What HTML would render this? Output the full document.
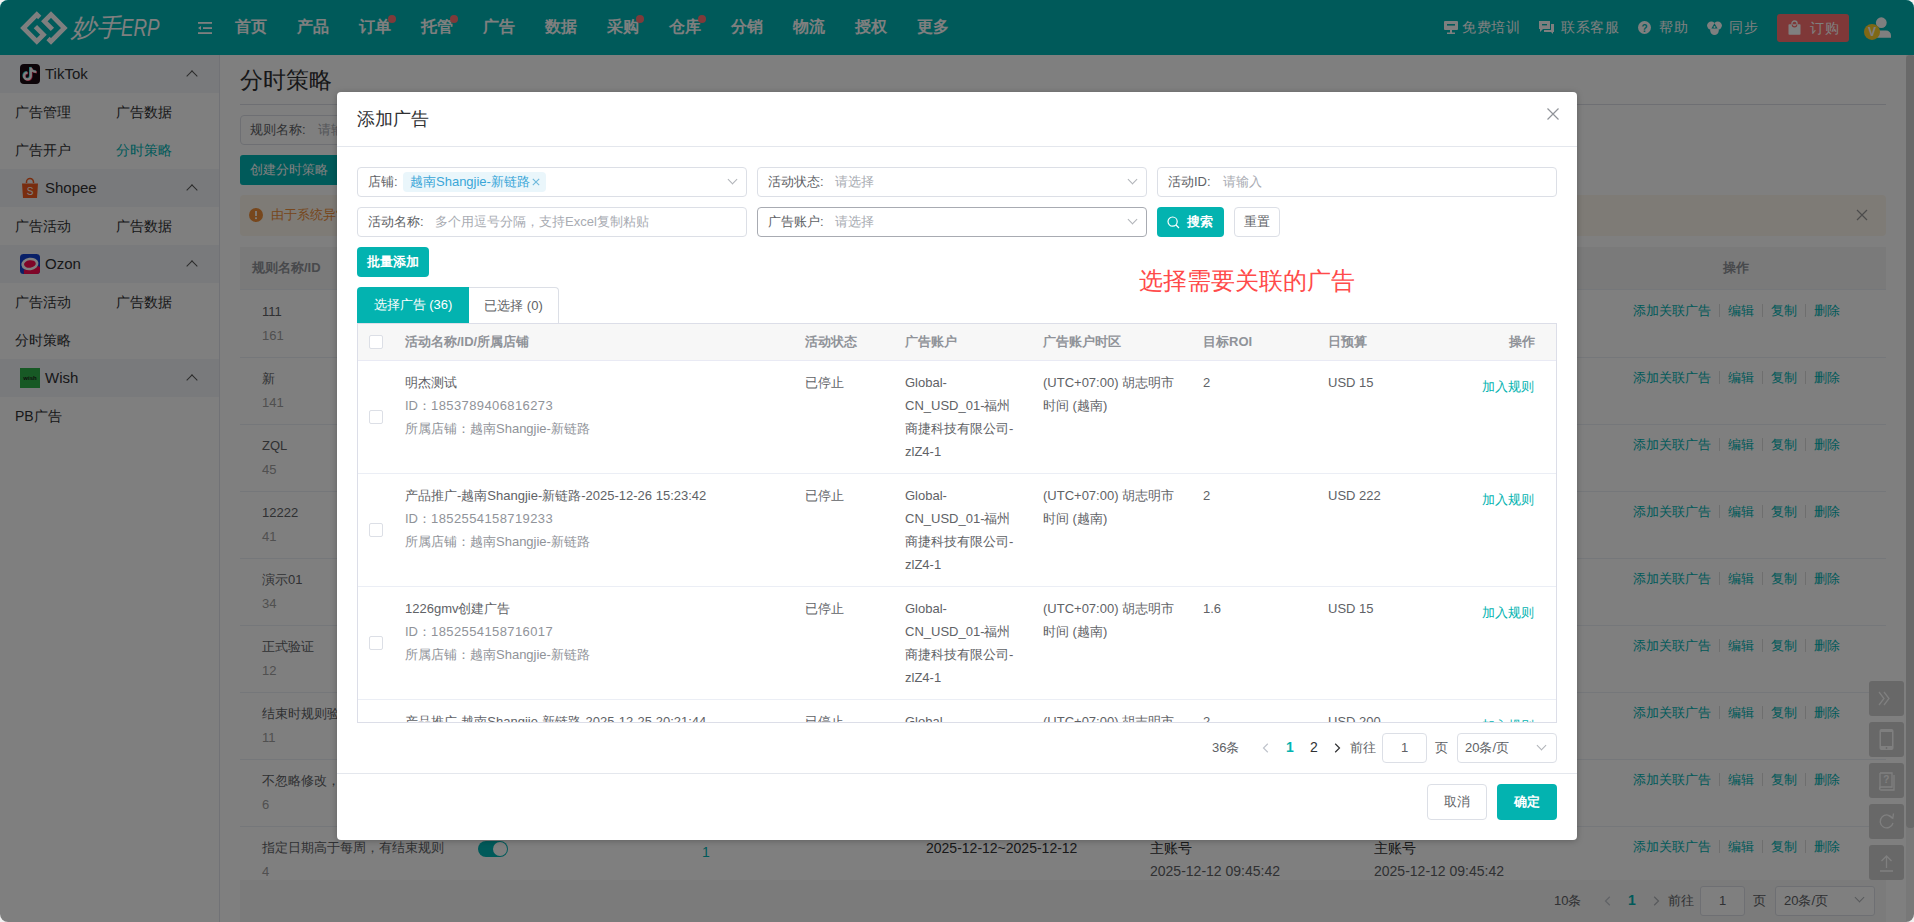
<!DOCTYPE html>
<html><head><meta charset="utf-8">
<style>
*{box-sizing:border-box;margin:0;padding:0}
html,body{width:1914px;height:922px;overflow:hidden;background:#f2f2f2}
body{font-family:"Liberation Sans",sans-serif;color:#606266;font-size:14px}
#scr{position:absolute;left:0;top:0;width:1914px;height:922px;overflow:hidden;border-radius:8px;background:#fff}
.abs{position:absolute}
/* header */
#hdr{position:absolute;left:0;top:0;width:1914px;height:55px;background:#00b4b4}
.nav{position:absolute;top:17px;font-size:16px;font-weight:bold;color:#fff;line-height:20px;white-space:nowrap}
.dot{position:absolute;width:8px;height:8px;border-radius:50%;background:#ff7474}
.hr{position:absolute;top:18px;font-size:14px;color:#fff;line-height:18px;white-space:nowrap;letter-spacing:0.6px}
/* sidebar */
#side{position:absolute;left:0;top:55px;width:220px;height:867px;background:#fff;border-right:1px solid #e2e4ec}
.sg{position:absolute;left:0;width:219px;height:38px;background:#f3f5f9}
.sg .t{position:absolute;left:45px;top:10px;font-size:15px;color:#303133;line-height:18px}
.sg .ic{position:absolute;left:20px;top:9px;width:20px;height:20px;border-radius:4px}
.sg .car{position:absolute;left:188px;top:17px;width:8px;height:8px;border-left:1.3px solid #555;border-top:1.3px solid #555;transform:rotate(45deg)}
.si{position:absolute;font-size:14px;color:#303133;line-height:18px;white-space:nowrap}
/* content */
.ct{position:absolute;white-space:nowrap}
.act{position:absolute;left:1633px;font-size:13px;color:#00b4b4;white-space:nowrap;line-height:18px}
.act i{display:inline-block;width:1px;height:13px;background:#dcdcdc;margin:0 8px 0 8px;vertical-align:-2px}
/* overlay */
#ov{position:absolute;left:0;top:0;width:1914px;height:922px;background:rgba(0,0,0,.5)}
/* modal */
#md{position:absolute;left:337px;top:92px;width:1240px;height:748px;background:#fff;border-radius:4px;box-shadow:0 1px 6px rgba(0,0,0,.25)}
.inp{position:absolute;height:30px;border:1px solid #dcdfe6;border-radius:4px;background:#fff}
.inp .lb{position:absolute;left:10px;top:6px;font-size:13px;color:#606266;line-height:16px;white-space:nowrap}
.inp .ph{position:absolute;top:6px;font-size:13px;color:#a8abb2;line-height:16px;white-space:nowrap}
.arr{position:absolute;width:7px;height:7px;border-right:1px solid #b0b3b8;border-bottom:1px solid #b0b3b8;transform:rotate(45deg)}
.btn{position:absolute;border-radius:4px;font-size:13px;text-align:center;white-space:nowrap}
.th{position:absolute;top:10px;font-size:13px;font-weight:bold;color:#909399;line-height:16px;white-space:nowrap}
.row{position:absolute;left:0;width:1198px;height:113px;border-bottom:1px solid #ebeef5}
.cell{position:absolute;top:10px;font-size:13px;line-height:23px;color:#606266;white-space:nowrap}
.cb{position:absolute;left:11px;width:14px;height:14px;border:1px solid #dcdfe6;border-radius:2px;background:#fff}
.gray{color:#909399}
</style></head><body>
<div id="scr">
<!-- HEADER -->
<div id="hdr">
  <svg class="abs" style="left:0;top:0" width="80" height="55" viewBox="0 0 80 55">
    <g fill="none" stroke="#fff" stroke-width="4.7" stroke-linejoin="miter" stroke-linecap="butt">
      <polyline points="39.75,17.44 36.8,14.6 23.45,28 36.8,41.35 43.45,34.7 35.4,26.55"/>
      <polyline transform="rotate(180 43.9 28)" points="39.75,17.44 36.8,14.6 23.45,28 36.8,41.35 43.45,34.7 35.4,26.55"/>
    </g>
  </svg>
  <div class="abs" style="left:71px;top:12px;font-size:25px;font-style:italic;color:#fff;line-height:30px;white-space:nowrap">妙手</div><div class="abs" style="left:121px;top:13px;font-size:24px;font-style:italic;color:#fff;line-height:30px;white-space:nowrap;transform:scaleX(0.78);transform-origin:0 0">ERP</div>
  <svg class="abs" style="left:197px;top:21px" width="17" height="15" viewBox="0 0 17 15"><g fill="#fff"><rect x="1" y="1" width="14" height="1.8"/><rect x="6" y="6.2" width="9" height="1.8"/><rect x="1" y="11.2" width="14" height="1.8"/><path d="M1 7.1 L4 5 L4 9 Z"/></g></svg>
  <div class="nav" style="left:235px">首页</div>
  <div class="nav" style="left:297px">产品</div>
  <div class="nav" style="left:359px">订单</div><div class="dot" style="left:388px;top:15px"></div>
  <div class="nav" style="left:421px">托管</div><div class="dot" style="left:450px;top:15px"></div>
  <div class="nav" style="left:483px">广告</div>
  <div class="nav" style="left:545px">数据</div>
  <div class="nav" style="left:607px">采购</div><div class="dot" style="left:636px;top:15px"></div>
  <div class="nav" style="left:669px">仓库</div><div class="dot" style="left:698px;top:15px"></div>
  <div class="nav" style="left:731px">分销</div>
  <div class="nav" style="left:793px">物流</div>
  <div class="nav" style="left:855px">授权</div>
  <div class="nav" style="left:917px">更多</div>
  <!-- right -->
  <svg class="abs" style="left:1444px;top:20px" width="14" height="14" viewBox="0 0 14 14"><g fill="#fff"><rect x="0" y="1" width="14" height="9" rx="1"/><rect x="6" y="10" width="2" height="3"/><rect x="3" y="12.5" width="8" height="1.5"/></g><rect x="3" y="4" width="8" height="1.6" fill="#00b4b4"/></svg>
  <div class="hr" style="left:1462px">免费培训</div>
  <svg class="abs" style="left:1539px;top:20px" width="15" height="14" viewBox="0 0 15 14"><path d="M0 1h11v8H4l-3 3V9H0z" fill="#fff"/><path d="M12 4h3v8h-1v2l-2-2H5v-2h7z" fill="#fff"/><rect x="3" y="4" width="5" height="1.4" fill="#00b4b4"/></svg>
  <div class="hr" style="left:1561px">联系客服</div>
  <svg class="abs" style="left:1638px;top:21px" width="13" height="13" viewBox="0 0 13 13"><circle cx="6.5" cy="6.5" r="6.5" fill="#fff"/><text x="6.5" y="10.5" font-size="10" font-weight="bold" text-anchor="middle" fill="#00b4b4" font-family="Liberation Sans">?</text></svg>
  <div class="hr" style="left:1659px">帮助</div>
  <svg class="abs" style="left:1707px;top:21px" width="15" height="14" viewBox="0 0 15 14"><g fill="#fff"><circle cx="4.3" cy="4.6" r="4.2"/><circle cx="10.7" cy="4.6" r="4.2"/><circle cx="7.5" cy="9.6" r="4.3"/></g><path d="M7.5 2.2L10.6 7.6H4.4Z" fill="#00b4b4"/><circle cx="7.5" cy="5.9" r="1" fill="#fff"/></svg>
  <div class="hr" style="left:1729px">同步</div>
  <div class="abs" style="left:1777px;top:14px;width:72px;height:28px;border-radius:3px;background:#ff7070"></div>
  <svg class="abs" style="left:1788px;top:20px" width="13" height="15" viewBox="0 0 13 15"><circle cx="6.5" cy="3.6" r="2.6" fill="none" stroke="#fff" stroke-width="1.3"/><rect x="0.5" y="4.2" width="12" height="10.6" rx="0.8" fill="#fff"/><path d="M4.2 4.6a2.3 2.3 0 0 0 4.6 0" fill="none" stroke="#ff7070" stroke-width="1.1"/></svg>
  <div class="hr" style="left:1810px;top:19px">订购</div>
  <svg class="abs" style="left:1862px;top:14px" width="34" height="30" viewBox="0 0 34 30"><circle cx="19.3" cy="8.7" r="5.4" fill="#fff"/><path d="M13 16.5 h11 a5 5 0 0 1 5 5 v2.2 h-16z" fill="#fff"/><circle cx="10" cy="17.9" r="8" fill="#ffd02a"/><text x="10" y="22.3" font-size="12" font-weight="bold" text-anchor="middle" fill="#fff" font-family="Liberation Sans">V</text></svg>
</div>

<!-- SIDEBAR -->
<div id="side">
  <div class="sg" style="top:0"><div class="ic" style="background:#1a0a12"></div>
    <svg class="abs" style="left:20px;top:9px" width="20" height="20" viewBox="0 0 20 20"><g fill="none" stroke-width="2.6" stroke-linecap="butt" transform="translate(2.2 1.4) scale(0.86)">
    <path d="M10 2.5V12.3A3.9 3.9 0 1 1 6.1 8.4M10 2.5C10.4 5.2 12.8 7.3 16.4 7.6" stroke="#25e0e0" transform="translate(-0.8,-0.6)"/>
    <path d="M10 2.5V12.3A3.9 3.9 0 1 1 6.1 8.4M10 2.5C10.4 5.2 12.8 7.3 16.4 7.6" stroke="#ff2d5c" transform="translate(0.8,0.6)"/>
    <path d="M10 2.5V12.3A3.9 3.9 0 1 1 6.1 8.4M10 2.5C10.4 5.2 12.8 7.3 16.4 7.6" stroke="#fff"/></g></svg>
    <div class="t">TikTok</div><div class="car"></div></div>
  <div class="si" style="left:15px;top:48px">广告管理</div><div class="si" style="left:116px;top:48px">广告数据</div>
  <div class="si" style="left:15px;top:86px">广告开户</div><div class="si" style="left:116px;top:86px;color:#00b4b4">分时策略</div>
  <div class="sg" style="top:114px"><div class="ic" style="background:#f2f2f2"></div>
    <svg class="abs" style="left:21px;top:8px" width="18" height="22" viewBox="0 0 18 22"><path d="M5.5 6V5a3.5 3.5 0 0 1 7 0v1" fill="none" stroke="#f25a1e" stroke-width="1.5"/><path d="M1 6.5h16l-1 14.5H2z" fill="#f25a1e"/><text x="9" y="18" font-size="10" text-anchor="middle" fill="#fff" font-family="Liberation Sans">S</text></svg>
    <div class="t">Shopee</div><div class="car"></div></div>
  <div class="si" style="left:15px;top:162px">广告活动</div><div class="si" style="left:116px;top:162px">广告数据</div>
  <div class="sg" style="top:190px">
    <svg class="abs" style="left:20px;top:9px" width="20" height="20" viewBox="0 0 20 20"><g><rect width="20" height="20" rx="3.5" fill="#1040d0"/><path d="M3.9 15.8L18 11.9L20 13V16.5A3.5 3.5 0 0 1 16.5 20H3.9Z" fill="#ff0a50"/><ellipse cx="9.9" cy="10" rx="8.6" ry="6.3" fill="#fff" transform="rotate(-8 9.9 10)"/><ellipse cx="9.9" cy="10" rx="5.9" ry="3.7" fill="#ff0a50" transform="rotate(-8 9.9 10)"/></g></svg>
    <div class="t">Ozon</div><div class="car"></div></div>
  <div class="si" style="left:15px;top:238px">广告活动</div><div class="si" style="left:116px;top:238px">广告数据</div>
  <div class="si" style="left:15px;top:276px">分时策略</div>
  <div class="sg" style="top:304px"><div class="ic" style="background:#2fb34a;border-radius:0"></div>
    <div class="abs" style="left:20px;top:15px;width:20px;font-size:6px;line-height:8px;color:#1a1a1a;text-align:center;font-weight:bold">wish</div>
    <div class="t">Wish</div><div class="car"></div></div>
  <div class="si" style="left:15px;top:352px">PB广告</div>
</div>

<!-- CONTENT -->
<div class="ct" style="left:240px;top:67px;font-size:23px;color:#303133;line-height:26px">分时策略</div>
<div class="abs" style="left:240px;top:104px;width:1646px;height:1px;background:#dcdfe6"></div>
<div class="abs" style="left:240px;top:115px;width:300px;height:30px;border:1px solid #dcdfe6;border-radius:4px"></div>
<div class="ct" style="left:250px;top:122px;font-size:13px;color:#606266;line-height:16px">规则名称:</div><div class="ct" style="left:318px;top:122px;font-size:13px;color:#a8abb2;line-height:16px">请输入</div>
<div class="abs" style="left:240px;top:155px;width:110px;height:30px;border-radius:3px;background:#00b4b4"></div>
<div class="ct" style="left:250px;top:162px;font-size:13px;color:#fff;line-height:16px">创建分时策略</div>
<div class="abs" style="left:240px;top:195px;width:1646px;height:41px;border-radius:4px;background:#fdf6ec"></div>
<svg class="abs" style="left:249px;top:208px" width="14" height="14" viewBox="0 0 14 14"><circle cx="7" cy="7" r="7" fill="#ee8f3a"/><rect x="6.1" y="3" width="1.8" height="5" fill="#fff"/><rect x="6.1" y="9.3" width="1.8" height="1.8" fill="#fff"/></svg>
<div class="ct" style="left:271px;top:207px;font-size:13px;color:#ee8f3a;line-height:16px">由于系统异常，部分数据可能存在延迟</div>
<svg class="abs" style="left:1856px;top:209px" width="12" height="12" viewBox="0 0 12 12"><path d="M1 1L11 11M11 1L1 11" stroke="#999" stroke-width="1.2"/></svg>
<!-- bg table -->
<div class="abs" style="left:240px;top:247px;width:1646px;height:43px;background:#f5f5f5;border-bottom:1px solid #ebeef5"></div>
<div class="ct" style="left:252px;top:260px;font-size:13px;font-weight:bold;color:#909399;line-height:16px">规则名称/ID</div>
<div class="ct" style="left:1723px;top:260px;font-size:13px;font-weight:bold;color:#909399;line-height:16px">操作</div>
<div class="abs" style="left:240px;top:357px;width:1646px;height:1px;background:#ebeef5"></div>
<div class="ct" style="left:262px;top:303px;font-size:13px;color:#606266;line-height:18px">111</div>
<div class="ct" style="left:262px;top:327px;font-size:13px;color:#a0a0a0;line-height:18px">161</div>
<div class="act" style="top:302px">添加关联广告<i></i>编辑<i></i>复制<i></i>删除</div>
<div class="abs" style="left:240px;top:424px;width:1646px;height:1px;background:#ebeef5"></div>
<div class="ct" style="left:262px;top:370px;font-size:13px;color:#606266;line-height:18px">新</div>
<div class="ct" style="left:262px;top:394px;font-size:13px;color:#a0a0a0;line-height:18px">141</div>
<div class="act" style="top:369px">添加关联广告<i></i>编辑<i></i>复制<i></i>删除</div>
<div class="abs" style="left:240px;top:491px;width:1646px;height:1px;background:#ebeef5"></div>
<div class="ct" style="left:262px;top:437px;font-size:13px;color:#606266;line-height:18px">ZQL</div>
<div class="ct" style="left:262px;top:461px;font-size:13px;color:#a0a0a0;line-height:18px">45</div>
<div class="act" style="top:436px">添加关联广告<i></i>编辑<i></i>复制<i></i>删除</div>
<div class="abs" style="left:240px;top:558px;width:1646px;height:1px;background:#ebeef5"></div>
<div class="ct" style="left:262px;top:504px;font-size:13px;color:#606266;line-height:18px">12222</div>
<div class="ct" style="left:262px;top:528px;font-size:13px;color:#a0a0a0;line-height:18px">41</div>
<div class="act" style="top:503px">添加关联广告<i></i>编辑<i></i>复制<i></i>删除</div>
<div class="abs" style="left:240px;top:625px;width:1646px;height:1px;background:#ebeef5"></div>
<div class="ct" style="left:262px;top:571px;font-size:13px;color:#606266;line-height:18px">演示01</div>
<div class="ct" style="left:262px;top:595px;font-size:13px;color:#a0a0a0;line-height:18px">34</div>
<div class="act" style="top:570px">添加关联广告<i></i>编辑<i></i>复制<i></i>删除</div>
<div class="abs" style="left:240px;top:692px;width:1646px;height:1px;background:#ebeef5"></div>
<div class="ct" style="left:262px;top:638px;font-size:13px;color:#606266;line-height:18px">正式验证</div>
<div class="ct" style="left:262px;top:662px;font-size:13px;color:#a0a0a0;line-height:18px">12</div>
<div class="act" style="top:637px">添加关联广告<i></i>编辑<i></i>复制<i></i>删除</div>
<div class="abs" style="left:240px;top:759px;width:1646px;height:1px;background:#ebeef5"></div>
<div class="ct" style="left:262px;top:705px;font-size:13px;color:#606266;line-height:18px">结束时规则验证</div>
<div class="ct" style="left:262px;top:729px;font-size:13px;color:#a0a0a0;line-height:18px">11</div>
<div class="act" style="top:704px">添加关联广告<i></i>编辑<i></i>复制<i></i>删除</div>
<div class="abs" style="left:240px;top:826px;width:1646px;height:1px;background:#ebeef5"></div>
<div class="ct" style="left:262px;top:772px;font-size:13px;color:#606266;line-height:18px">不忽略修改，</div>
<div class="ct" style="left:262px;top:796px;font-size:13px;color:#a0a0a0;line-height:18px">6</div>
<div class="act" style="top:771px">添加关联广告<i></i>编辑<i></i>复制<i></i>删除</div>
<div class="abs" style="left:240px;top:893px;width:1646px;height:1px;background:#ebeef5"></div>
<div class="ct" style="left:262px;top:839px;font-size:13px;color:#606266;line-height:18px">指定日期高于每周，有结束规则</div>
<div class="ct" style="left:262px;top:863px;font-size:13px;color:#a0a0a0;line-height:18px">4</div>
<div class="act" style="top:838px">添加关联广告<i></i>编辑<i></i>复制<i></i>删除</div>
<div class="abs" style="left:478px;top:841px;width:30px;height:16px;border-radius:8px;background:#00b4b4"></div><div class="abs" style="left:493px;top:842px;width:14px;height:14px;border-radius:50%;background:#fff"></div>
<div class="ct" style="left:702px;top:843px;font-size:14px;color:#00b4b4;line-height:18px">1</div>
<div class="ct" style="left:926px;top:839px;font-size:14px;color:#303133;line-height:18px">2025-12-12~2025-12-12</div>
<div class="ct" style="left:1150px;top:839px;font-size:14px;color:#303133;line-height:18px">主账号</div>
<div class="ct" style="left:1150px;top:862px;font-size:14px;color:#606266;line-height:18px">2025-12-12 09:45:42</div>
<div class="ct" style="left:1374px;top:839px;font-size:14px;color:#303133;line-height:18px">主账号</div>
<div class="ct" style="left:1374px;top:862px;font-size:14px;color:#606266;line-height:18px">2025-12-12 09:45:42</div>
<div class="abs" style="left:240px;top:880px;width:1646px;height:42px;background:#f6f6f6"></div>
<div class="ct" style="left:1554px;top:893px;font-size:13px;color:#606266;line-height:16px">10条</div>
<svg class="abs" style="left:1604px;top:896px" width="7" height="10" viewBox="0 0 7 10"><polyline points="5.8,0.8 1.5,5 5.8,9.2" fill="none" stroke="#c0c4cc" stroke-width="1.2"/></svg>
<div class="ct" style="left:1628px;top:892px;font-size:14px;font-weight:bold;color:#00b4b4;line-height:16px">1</div>
<svg class="abs" style="left:1653px;top:896px" width="7" height="10" viewBox="0 0 7 10"><polyline points="1.2,0.8 5.5,5 1.2,9.2" fill="none" stroke="#b0b3b8" stroke-width="1.2"/></svg>
<div class="ct" style="left:1668px;top:893px;font-size:13px;color:#606266;line-height:16px">前往</div>
<div class="abs" style="left:1700px;top:886px;width:45px;height:30px;border:1px solid #dcdfe6;border-radius:3px;background:#fff"></div>
<div class="ct" style="left:1719px;top:893px;font-size:13px;color:#606266;line-height:16px">1</div>
<div class="ct" style="left:1753px;top:893px;font-size:13px;color:#606266;line-height:16px">页</div>
<div class="abs" style="left:1775px;top:886px;width:100px;height:30px;border:1px solid #dcdfe6;border-radius:3px;background:#fff"></div><div class="arr" style="left:1856px;top:894px"></div>
<div class="ct" style="left:1784px;top:893px;font-size:13px;color:#606266;line-height:16px">20条/页</div>
<!-- float buttons -->
<div class="abs" style="left:1869px;top:681px;width:35px;height:35px;border-radius:3px;background:#d0d0d0"></div>
<svg class="abs" style="left:1869px;top:681px" width="35" height="35" viewBox="0 0 35 35"><polyline points="10,11 15,17.5 10,24" fill="none" stroke="#fff" stroke-width="1.3"/><polyline points="15,11 20,17.5 15,24" fill="none" stroke="#fff" stroke-width="1.3"/></svg>
<div class="abs" style="left:1869px;top:722px;width:35px;height:35px;border-radius:3px;background:#d0d0d0"></div>
<svg class="abs" style="left:1869px;top:722px" width="35" height="35" viewBox="0 0 35 35"><rect x="10.5" y="7" width="14" height="21" rx="2" fill="#fff"/><rect x="12" y="10" width="11" height="14" fill="#d0d0d0"/><circle cx="17.5" cy="26" r="0.9" fill="#d0d0d0"/></svg>
<div class="abs" style="left:1869px;top:763px;width:35px;height:35px;border-radius:3px;background:#d0d0d0"></div>
<svg class="abs" style="left:1869px;top:763px" width="35" height="35" viewBox="0 0 35 35"><path d="M11 10h12v14H12a1.5 1.5 0 0 0 0 3h13V12" fill="none" stroke="#fff" stroke-width="1.3"/><path d="M11 10v15.5" stroke="#fff" stroke-width="1.3"/><text x="17.2" y="20" font-size="10" font-weight="bold" text-anchor="middle" fill="#fff" font-family="Liberation Sans">?</text></svg>
<div class="abs" style="left:1869px;top:804px;width:35px;height:35px;border-radius:3px;background:#d0d0d0"></div>
<svg class="abs" style="left:1869px;top:804px" width="35" height="35" viewBox="0 0 35 35"><path d="M23.5 14.5A6.5 6.5 0 1 0 24 19" fill="none" stroke="#fff" stroke-width="1.3"/><polyline points="19.5,11.5 23.8,14.2 24.5,9.5" fill="none" stroke="#fff" stroke-width="1.3"/></svg>
<div class="abs" style="left:1869px;top:845px;width:35px;height:35px;border-radius:3px;background:#d0d0d0"></div>
<svg class="abs" style="left:1869px;top:845px" width="35" height="35" viewBox="0 0 35 35"><path d="M17.5 11v12M12.5 16l5-5 5 5M11 26h13" fill="none" stroke="#fff" stroke-width="1.3"/></svg>
<!-- scrollbar -->
<div class="abs" style="left:1906px;top:55px;width:8px;height:867px;background:#f1f1f1"></div>
<div class="abs" style="left:1906px;top:55px;width:9px;height:773px;border-radius:4px;background:#d2d2d2"></div>

<div id="ov"></div>

<!-- MODAL -->
<div id="md">
  <div class="abs" style="left:20px;top:15px;font-size:18px;color:#303133;line-height:24px">添加广告</div>
  <svg class="abs" style="left:1210px;top:16px" width="12" height="12" viewBox="0 0 12 12"><path d="M0.5 0.5L11.5 11.5M11.5 0.5L0.5 11.5" stroke="#909399" stroke-width="1.2"/></svg>
  <div class="abs" style="left:0;top:54px;width:1240px;height:1px;background:#e4e7ed"></div>

  <!-- form -->
  <div class="inp" style="left:20px;top:75px;width:390px">
    <div class="lb">店铺:</div>
    <div class="abs" style="left:45px;top:4px;width:143px;height:20px;padding:0 0 0 7px;background:#eaf6fb;border-radius:4px;font-size:13px;line-height:20px;color:#3aa6d8;white-space:nowrap;overflow:hidden">越南Shangjie-新链路<svg class="abs" style="left:129px;top:6px" width="8" height="8" viewBox="0 0 8 8"><path d="M0.8 0.8L7.2 7.2M7.2 0.8L0.8 7.2" stroke="#6fb9dc" stroke-width="1.1"/></svg></div>
    <div class="arr" style="left:371px;top:8px"></div>
  </div>
  <div class="inp" style="left:420px;top:75px;width:390px">
    <div class="lb">活动状态:</div><div class="ph" style="left:77px">请选择</div>
    <div class="arr" style="left:371px;top:8px"></div>
  </div>
  <div class="inp" style="left:820px;top:75px;width:400px">
    <div class="lb">活动ID:</div><div class="ph" style="left:65px">请输入</div>
  </div>
  <div class="inp" style="left:20px;top:115px;width:390px">
    <div class="lb">活动名称:</div><div class="ph" style="left:77px">多个用逗号分隔，支持Excel复制粘贴</div>
  </div>
  <div class="inp" style="left:420px;top:115px;width:390px;border-color:#a8abb2">
    <div class="lb">广告账户:</div><div class="ph" style="left:77px">请选择</div>
    <div class="arr" style="left:371px;top:8px"></div>
  </div>
  <div class="btn" style="left:820px;top:115px;width:67px;height:30px;background:#03b3b0;color:#fff;line-height:30px">
    <svg class="abs" style="left:10px;top:9px" width="13" height="13" viewBox="0 0 13 13"><circle cx="5.6" cy="5.6" r="4.6" fill="none" stroke="#fff" stroke-width="1.2"/><path d="M9 9L12 12" stroke="#fff" stroke-width="1.2"/></svg>
    <span class="abs" style="left:30px;top:0;font-weight:bold">搜索</span></div>
  <div class="btn" style="left:897px;top:115px;width:46px;height:30px;border:1px solid #dcdfe6;background:#fff;color:#606266;line-height:28px">重置</div>

  <div class="btn" style="left:20px;top:155px;width:72px;height:30px;background:#03b3b0;color:#fff;line-height:30px;font-weight:bold">批量添加</div>
  <div class="abs" style="left:802px;top:174px;font-size:24px;color:#ff4a4a;line-height:30px;white-space:nowrap">选择需要关联的广告</div>

  <!-- tabs -->
  <div class="abs" style="left:20px;top:195px;width:112px;height:36px;background:#03b3b0;border-radius:4px 0 0 0;color:#fff;font-size:13px;line-height:36px;text-align:center">选择广告 (36)</div>
  <div class="abs" style="left:132px;top:195px;width:90px;height:36px;border:1px solid #dcdfe6;border-left:none;border-bottom:none;border-radius:0 4px 0 0;background:#fff;color:#606266;font-size:13px;line-height:35px;text-align:center">已选择 (0)</div>

  <!-- table -->
  <div class="abs" style="left:20px;top:231px;width:1200px;height:400px;border:1px solid #dcdee8;overflow:hidden;background:#fff">
    <div class="abs" style="left:0;top:0;width:1198px;height:37px;background:#f7f7f7;border-bottom:1px solid #e9eaf4">
      <div class="cb" style="top:11px"></div>
      <div class="th" style="left:47px">活动名称/ID/所属店铺</div>
      <div class="th" style="left:447px">活动状态</div>
      <div class="th" style="left:547px">广告账户</div>
      <div class="th" style="left:685px">广告账户时区</div>
      <div class="th" style="left:845px">目标ROI</div>
      <div class="th" style="left:970px">日预算</div>
      <div class="th" style="left:1151px">操作</div>
    </div>
    <div class="row" style="top:37px">
<div class="cb" style="top:49px"></div>
<div class="cell" style="left:47px">明杰测试<br><span class="gray">ID：<span style="letter-spacing:0.4px">1853789406816273</span></span><br><span class="gray">所属店铺：越南Shangjie-新链路</span></div>
<div class="cell" style="left:447px">已停止</div>
<div class="cell" style="left:547px">Global-<br>CN_USD_01-福州<br>商捷科技有限公司-<br>zlZ4-1</div>
<div class="cell" style="left:685px">(UTC+07:00) 胡志明市<br>时间 (越南)</div>
<div class="cell" style="left:845px">2</div>
<div class="cell" style="left:970px">USD 15</div>
<div class="cell" style="left:1124px;top:14px;color:#03b3b0">加入规则</div>
</div>
<div class="row" style="top:150px">
<div class="cb" style="top:49px"></div>
<div class="cell" style="left:47px">产品推广-越南Shangjie-新链路-2025-12-26 15:23:42<br><span class="gray">ID：<span style="letter-spacing:0.4px">1852554158719233</span></span><br><span class="gray">所属店铺：越南Shangjie-新链路</span></div>
<div class="cell" style="left:447px">已停止</div>
<div class="cell" style="left:547px">Global-<br>CN_USD_01-福州<br>商捷科技有限公司-<br>zlZ4-1</div>
<div class="cell" style="left:685px">(UTC+07:00) 胡志明市<br>时间 (越南)</div>
<div class="cell" style="left:845px">2</div>
<div class="cell" style="left:970px">USD 222</div>
<div class="cell" style="left:1124px;top:14px;color:#03b3b0">加入规则</div>
</div>
<div class="row" style="top:263px">
<div class="cb" style="top:49px"></div>
<div class="cell" style="left:47px">1226gmv创建广告<br><span class="gray">ID：<span style="letter-spacing:0.4px">1852554158716017</span></span><br><span class="gray">所属店铺：越南Shangjie-新链路</span></div>
<div class="cell" style="left:447px">已停止</div>
<div class="cell" style="left:547px">Global-<br>CN_USD_01-福州<br>商捷科技有限公司-<br>zlZ4-1</div>
<div class="cell" style="left:685px">(UTC+07:00) 胡志明市<br>时间 (越南)</div>
<div class="cell" style="left:845px">1.6</div>
<div class="cell" style="left:970px">USD 15</div>
<div class="cell" style="left:1124px;top:14px;color:#03b3b0">加入规则</div>
</div>
<div class="row" style="top:376px">
<div class="cb" style="top:49px"></div>
<div class="cell" style="left:47px">产品推广-越南Shangjie-新链路-2025-12-25 20:21:44<br><span class="gray">ID：<span style="letter-spacing:0.4px">1852554158716000</span></span><br><span class="gray">所属店铺：越南Shangjie-新链路</span></div>
<div class="cell" style="left:447px">已停止</div>
<div class="cell" style="left:547px">Global-<br>CN_USD_01-福州<br>商捷科技有限公司-<br>zlZ4-1</div>
<div class="cell" style="left:685px">(UTC+07:00) 胡志明市<br>时间 (越南)</div>
<div class="cell" style="left:845px">2</div>
<div class="cell" style="left:970px">USD 200</div>
<div class="cell" style="left:1124px;top:14px;color:#03b3b0">加入规则</div>
</div>
  </div>

  <!-- pagination -->
  <div class="abs" style="left:875px;top:648px;font-size:13px;color:#606266;line-height:16px;white-space:nowrap">36条</div>
  <svg class="abs" style="left:925px;top:651px" width="7" height="10" viewBox="0 0 7 10"><polyline points="5.8,0.8 1.5,5 5.8,9.2" fill="none" stroke="#c0c4cc" stroke-width="1.2"/></svg>
  <div class="abs" style="left:949px;top:647px;font-size:14px;font-weight:bold;color:#03b3b0;line-height:16px">1</div>
  <div class="abs" style="left:973px;top:647px;font-size:14px;color:#303133;line-height:16px">2</div>
  <svg class="abs" style="left:997px;top:651px" width="7" height="10" viewBox="0 0 7 10"><polyline points="1.2,0.8 5.5,5 1.2,9.2" fill="none" stroke="#303133" stroke-width="1.2"/></svg>
  <div class="abs" style="left:1013px;top:648px;font-size:13px;color:#606266;line-height:16px;white-space:nowrap">前往</div>
  <div class="inp" style="left:1045px;top:641px;width:45px;height:30px"><div class="abs" style="left:0;top:6px;width:43px;text-align:center;font-size:13px;color:#606266;line-height:16px">1</div></div>
  <div class="abs" style="left:1098px;top:648px;font-size:13px;color:#606266;line-height:16px">页</div>
  <div class="inp" style="left:1120px;top:641px;width:100px;height:30px"><div class="abs" style="left:7px;top:6px;font-size:13px;color:#606266;line-height:16px;white-space:nowrap">20条/页</div><div class="arr" style="left:80px;top:8px"></div></div>

  <div class="abs" style="left:0;top:681px;width:1240px;height:1px;background:#e4e7ed"></div>
  <div class="btn" style="left:1090px;top:692px;width:60px;height:36px;border:1px solid #dcdfe6;background:#fff;color:#606266;line-height:34px">取消</div>
  <div class="btn" style="left:1160px;top:692px;width:60px;height:36px;background:#03b3b0;color:#fff;line-height:36px;font-weight:bold">确定</div>
</div>
</div>
</body></html>
